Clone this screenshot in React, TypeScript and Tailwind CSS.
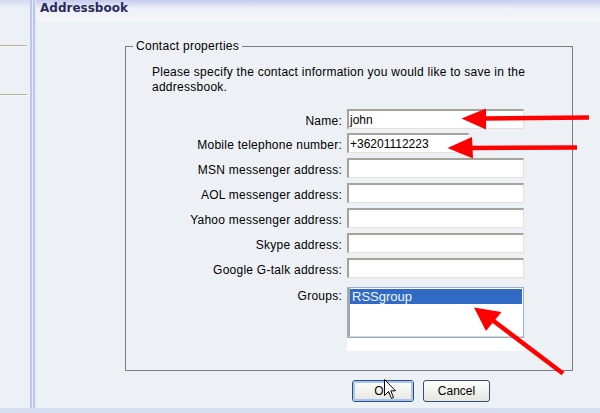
import React from "react";

type Row = { label: string; value: string; wide: boolean; first?: boolean };

const rows: Row[] = [
  { label: "Name:", value: "john", wide: true, first: true },
  { label: "Mobile telephone number:", value: "+36201112223", wide: false },
  { label: "MSN messenger address:", value: "", wide: true },
  { label: "AOL messenger address:", value: "", wide: true },
  { label: "Yahoo messenger address:", value: "", wide: true },
  { label: "Skype address:", value: "", wide: true },
  { label: "Google G-talk address:", value: "", wide: true },
];

function TextBox({ value, wide }: { value: string; wide: boolean }) {
  return (
    <div
      className={
        (wide ? "w-[177px] " : "w-[122px] ") +
        "h-[20px] bg-white border-t-2 border-l-2 border-r border-b border-t-[#a4a49a] border-l-[#a4a49a] border-r-[#e2e2da] border-b-[#e2e2da] pl-[1px] pt-[2px] text-[12px] leading-[14px] text-black"
      }
    >
      {value}
    </div>
  );
}

export default function App() {
  return (
    <div className="relative w-[600px] h-[413px] overflow-hidden bg-[#edf1f5] flex flex-col font-['Liberation_Sans',Arial,sans-serif] text-black">
      <div className="flex flex-1">
        {/* left panel */}
        <div className="w-[30px] flex flex-col">
          <div className="h-[8px] bg-linear-to-b from-[#d4d9f2] to-[#edf1f5]" />
          <div className="h-[37px]" />
          <div className="w-[27px] h-[1px] bg-[#b7b29c]" />
          <div className="w-[27px] h-[1px] bg-[#f7f8f6]" />
          <div className="h-[47px]" />
          <div className="w-[27px] h-[1px] bg-[#b7b29c]" />
          <div className="w-[27px] h-[1px] bg-[#f7f8f6]" />
        </div>
        {/* separator */}
        <div className="flex w-[6px]">
          <div className="w-[2px] bg-[#bcc5ea]" />
          <div className="w-[1px] bg-[#e8ecf8]" />
          <div className="w-[2px] bg-[#bcc5ea]" />
          <div className="w-[1px] bg-[#e4e9f5]" />
        </div>
        {/* main */}
        <div className="flex-1 flex flex-col">
          <div className="h-[22px] pl-[4px] bg-linear-to-b from-[#c6ccef] via-[#eff2f9] via-40% to-[#f3f5f9]">
            <div className="font-['DejaVu_Sans',Verdana,sans-serif] font-bold text-[12px] leading-[16px] text-[#2a2d5c]">
              Addressbook
            </div>
          </div>

          <fieldset className="mt-[17px] ml-[89px] w-[448px] h-[332px] border border-[#7c7c7c] p-0 m-0">
            <legend className="ml-[7px] px-[3px] text-[12px] leading-[14px] tracking-[0.28px]">
              Contact properties
            </legend>
            <p className="mt-[12px] pl-[26px] text-[12px] leading-[15px] tracking-[0.26px]">
              Please specify the contact information you would like to save in the
              <br />
              addressbook.
            </p>
            <div className="mt-[14px] flex flex-col">
              {rows.map((r) => (
                <div
                  key={r.label}
                  className={(r.first ? "h-[24px]" : "h-[25px]") + " flex items-start"}
                >
                  <div className="w-[216px] text-right text-[12px] leading-[14px] pt-[5px] tracking-[0.25px] whitespace-nowrap">
                    {r.label}
                  </div>
                  <div className="ml-[5px]">
                    <TextBox value={r.value} wide={r.wide} />
                  </div>
                </div>
              ))}
              <div className="mt-[4px] flex items-start">
                <div className="w-[216px] text-right text-[12px] leading-[14px] pt-[2px] tracking-[0.25px]">
                  Groups:
                </div>
                <div className="ml-[5px] w-[177px] flex flex-col">
                  <div className="h-[51px] border border-[#98adc9] bg-white">
                    <div className="h-full border-l-2 border-b border-l-[#a8a89e] border-b-[#d6d6ce] pt-[1px] pr-[1px]">
                      <div className="h-[15px] bg-[#316ac5] text-[#f2f6ff] text-[13px] leading-[15px] pl-[2px]">
                        RSSgroup
                      </div>
                    </div>
                  </div>
                  <div className="h-[13px] bg-white" />
                </div>
              </div>
            </div>
          </fieldset>

          <div className="mt-[9px] ml-[316px] flex gap-[9px]">
            <button className="w-[62px] h-[22px] rounded-[3px] border border-[#2f4f7c] bg-linear-to-b from-white to-[#e6e6de] p-0">
              <div className="h-full rounded-[2px] border-2 border-[#a9c4f0] flex items-center justify-center text-[12px] leading-[14px]">
                OK
              </div>
            </button>
            <button className="w-[67px] h-[22px] rounded-[3px] border border-[#2f4f7c] bg-linear-to-b from-white to-[#e6e6de] flex items-center justify-center text-[12px] leading-[14px] p-0">
              Cancel
            </button>
          </div>
        </div>
      </div>
      <div className="h-[5px] bg-[#d6def0]" />

      {/* annotation arrows */}
      <svg
        className="absolute left-0 top-0 pointer-events-none"
        width="600"
        height="413"
        viewBox="0 0 600 413"
      >
        <g fill="#ff0000" stroke="none">
          <polygon points="461.5,118.5 486,108.5 486,129.5" />
          <polygon points="447.5,148 472,137 473,158.5" />
          <polygon points="474,307.5 486,331 501.5,312" />
        </g>
        <g stroke="#ff0000" strokeWidth="4.5" strokeLinecap="butt">
          <line x1="483" y1="118.5" x2="589" y2="117.5" />
          <line x1="470" y1="148" x2="577" y2="147.5" />
          <line x1="491" y1="319" x2="563" y2="373.5" />
        </g>
      </svg>

      {/* mouse cursor */}
      <svg
        className="absolute left-[384px] top-[379px] pointer-events-none"
        width="13"
        height="21"
        viewBox="0 0 13 21"
      >
        <polygon
          points="0.5,0.5 0.5,16.5 4.5,12.5 7.5,19.5 9.5,18.5 6.8,11.8 11.5,11.8"
          fill="#ffffff"
          stroke="#000000"
          strokeWidth="1"
          strokeLinejoin="miter"
        />
      </svg>
    </div>
  );
}
